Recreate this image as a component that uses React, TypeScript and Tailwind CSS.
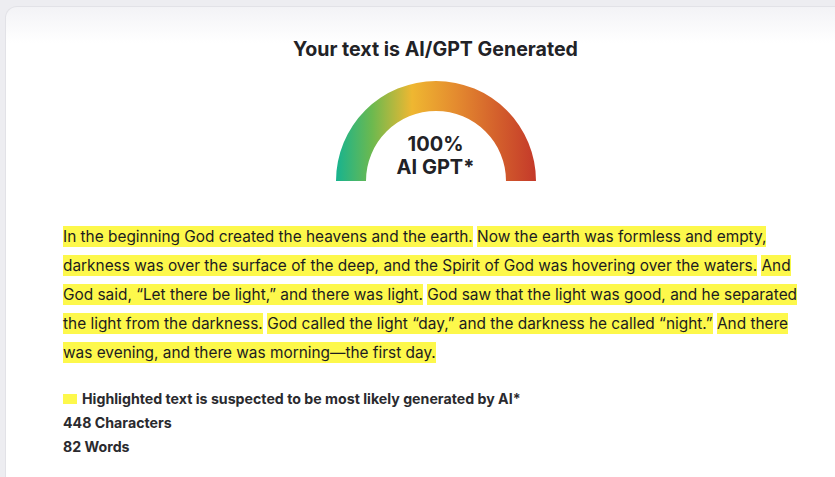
import React from 'react';

const sentences = [
    'In the beginning God created the heavens and the earth.',
    'Now the earth was formless and empty, darkness was over the surface of the deep, and the Spirit of God was hovering over the waters.',
    'And God said, \u201cLet there be light,\u201d and there was light.',
    'God saw that the light was good, and he separated the light from the darkness.',
    'God called the light \u201cday,\u201d and the darkness he called \u201cnight.\u201d',
    'And there was evening, and there was morning\u2014the first day.',
];

const Gauge: React.FC = () => {
    return (
        <div className="relative w-[200px] h-[100px]">
            <svg width="200" height="100" viewBox="0 0 200 100" className="block">
                <defs>
                    <linearGradient id="gauge" x1="0" y1="0" x2="1" y2="0">
                        <stop offset="0" stopColor="#17b38f" />
                        <stop offset="0.18" stopColor="#6cb94f" />
                        <stop offset="0.38" stopColor="#efb731" />
                        <stop offset="0.6" stopColor="#e48b2f" />
                        <stop offset="0.8" stopColor="#d4612c" />
                        <stop offset="1" stopColor="#c4392a" />
                    </linearGradient>
                </defs>
                <path d="M0,100 A100,100 0 0 1 200,100 L170,100 A70,70 0 0 0 30,100 Z" fill="url(#gauge)" />
            </svg>
            {/* score label sits inside the arc */}
            <div className="absolute inset-x-0 bottom-[2px] text-center text-[20px] font-bold leading-[23px] text-[#222226]">
                <div>100%</div>
                <div>AI GPT*</div>
            </div>
        </div>
    );
};

const App: React.FC = () => {
    return (
        <div
            className="w-[835px] h-[477px] overflow-hidden bg-[#ededf1] pt-[6px] pl-[5px]"
            style={{ fontFamily: 'Inter, "Noto Sans", sans-serif' }}
        >
            <div className="w-[860px] h-[520px] rounded-l-[12px] border-l border-t border-[#e2e2e7] bg-[linear-gradient(to_bottom,#f3f3f6,#ffffff_36px)] pt-[28px]">
                <div className="flex flex-col items-center">
                    <h1 className="text-[19.6px] font-bold leading-[28px] text-[#222226]">
                        Your text is AI/GPT Generated
                    </h1>
                    <div className="mt-[18px]">
                        <Gauge />
                    </div>
                </div>

                <div className="px-[57px] mt-[41px]">
                    <p className="text-[15.4px] leading-[29px] text-[#1c1c1f]">
                        {sentences.map((s, i) => (
                            <React.Fragment key={i}>
                                <span className="bg-[#fdf84b] py-px">{s}</span>
                                {i < sentences.length - 1 ? ' ' : null}
                            </React.Fragment>
                        ))}
                    </p>

                    <div className="mt-[20px] text-[14.2px] font-bold leading-[24px] text-[#2a2a2e]">
                        <div className="flex items-center gap-[5px]">
                            <span className="w-[14px] h-[10px] bg-[#fdf84b]" />
                            <span>Highlighted text is suspected to be most likely generated by AI*</span>
                        </div>
                        <div>448 Characters</div>
                        <div>82 Words</div>
                    </div>
                </div>
            </div>
        </div>
    );
};

export default App;
